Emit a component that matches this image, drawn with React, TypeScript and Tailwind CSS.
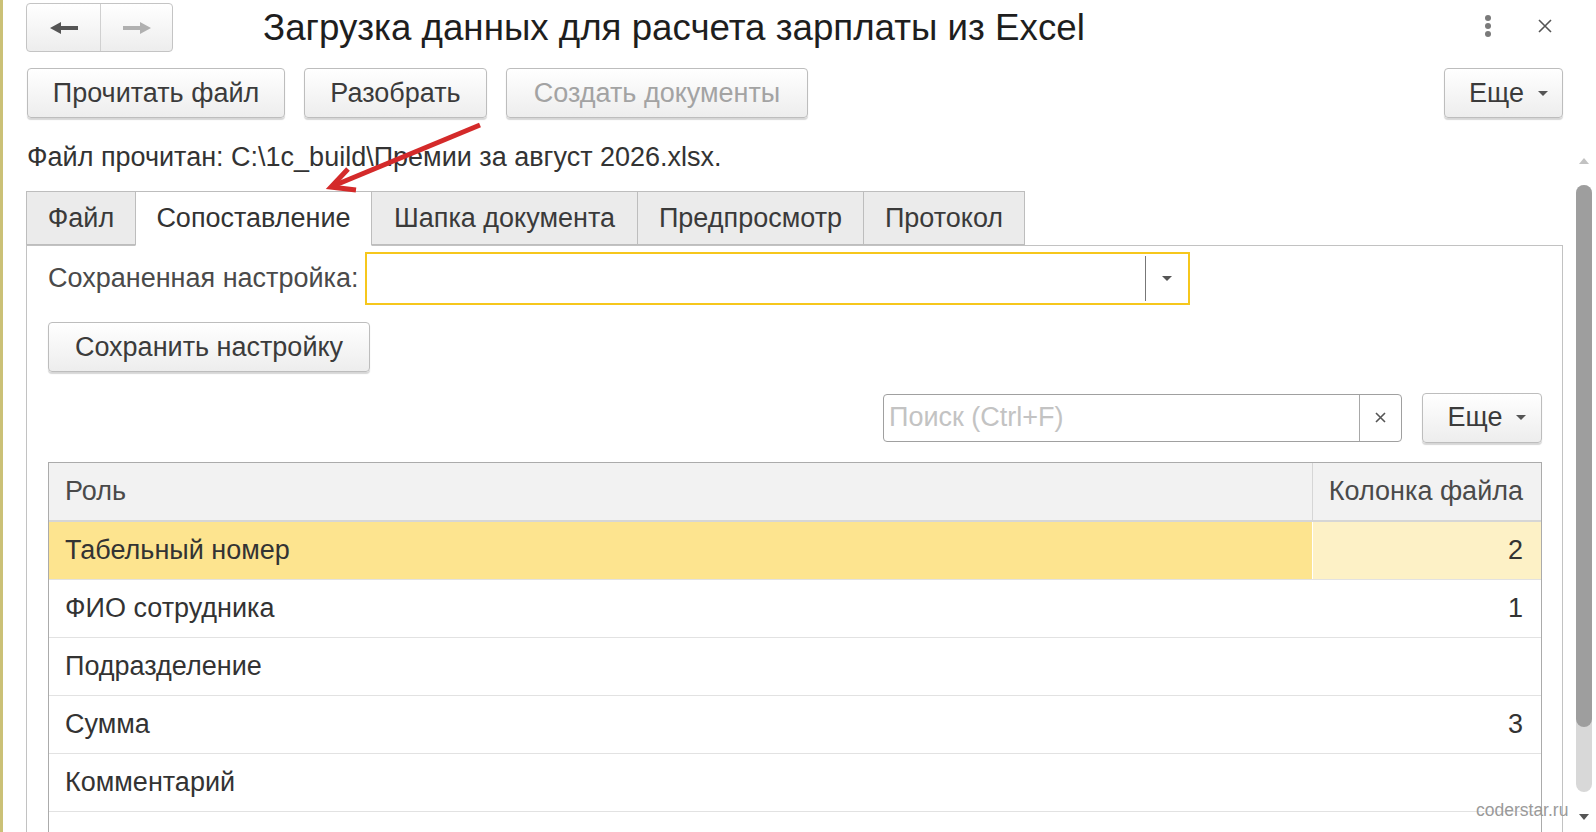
import React from 'react';

const Tri = ({ color = '#555' }: { color?: string }) => (
  <svg width="10" height="5" viewBox="0 0 10 5">
    <path d="M0 0h10L5 5z" fill={color} />
  </svg>
);

interface BtnProps {
  children: React.ReactNode;
  className?: string;
  disabled?: boolean;
}

const Btn: React.FC<BtnProps> = ({ children, className = '', disabled }) => (
  <div
    className={`h-[50px] shrink-0 flex items-center justify-center rounded-[4px] border border-[#bdbdbd] bg-linear-to-b from-white to-[#ededed] shadow-[0_2px_1px_rgba(0,0,0,0.16)] text-[27px] ${
      disabled ? 'text-[#a3a3a3]' : 'text-[#3b3b3b]'
    } ${className}`}
  >
    {children}
  </div>
);

const rows: { role: string; col: string }[] = [
  { role: 'Табельный номер', col: '2' },
  { role: 'ФИО сотрудника', col: '1' },
  { role: 'Подразделение', col: '' },
  { role: 'Сумма', col: '3' },
  { role: 'Комментарий', col: '' },
  { role: '', col: '' },
];

const tabs = [
  { name: 'Файл', w: 'w-[110px]' },
  { name: 'Сопоставление', w: 'w-[237px]', active: true },
  { name: 'Шапка документа', w: 'w-[267px]' },
  { name: 'Предпросмотр', w: 'w-[227px]' },
  { name: 'Протокол', w: 'w-[162px]' },
];

export default function App() {
  return (
    <div className="relative w-[1596px] h-[832px] overflow-hidden bg-white flex font-['Liberation_Sans',Arial,sans-serif] text-[#333]">
      <div className="w-[3px] h-full shrink-0 bg-[#cbc177]" />
      <div className="flex-1 flex flex-col min-h-0">
        {/* top bar */}
        <div className="h-[68px] shrink-0 flex items-start">
          <div className="mt-[3px] ml-[23px] w-[147px] h-[49px] flex rounded-[4px] border border-[#c4c4c4] bg-linear-to-b from-white to-[#ededed]">
            <div className="w-[74px] flex items-center justify-center border-r border-[#d0d0d0]">
              <svg width="28" height="12" viewBox="0 0 28 12">
                <path d="M0 6L11 0v4h17v4H11v4z" fill="#555" />
              </svg>
            </div>
            <div className="flex-1 flex items-center justify-center">
              <svg width="28" height="12" viewBox="0 0 28 12">
                <path d="M28 6L17 0v4H0v4h17v4z" fill="#b0b0b0" />
              </svg>
            </div>
          </div>
          <div className="ml-[90px] mt-[8px] text-[36.7px] leading-[40px] text-[#1e1e1e] whitespace-nowrap">
            Загрузка данных для расчета зарплаты из Excel
          </div>
          <div className="ml-auto mt-[15px] flex flex-col gap-[2px] items-center">
            <div className="w-[6px] h-[6px] rounded-full bg-[#7a7a7a]" />
            <div className="w-[6px] h-[6px] rounded-full bg-[#7a7a7a]" />
            <div className="w-[6px] h-[6px] rounded-full bg-[#7a7a7a]" />
          </div>
          <div className="ml-[47px] mr-[44px] mt-[19px]">
            <svg width="14" height="14" viewBox="0 0 14 14">
              <path d="M1 1l12 12M13 1L1 13" stroke="#555" strokeWidth="1.6" />
            </svg>
          </div>
        </div>

        {/* command bar */}
        <div className="h-[50px] shrink-0 flex items-center pl-[24px] pr-[33px]">
          <Btn className="w-[258px]">Прочитать файл</Btn>
          <Btn className="w-[183px] ml-[19px]">Разобрать</Btn>
          <Btn className="w-[302px] ml-[19px]" disabled>
            Создать документы
          </Btn>
          <Btn className="w-[119px] ml-auto gap-[14px] pl-[10px]">
            <span>Еще</span>
            <Tri />
          </Btn>
        </div>

        {/* scrollable area */}
        <div className="flex-1 min-h-0 flex overflow-hidden">
          <div className="ml-[23px] w-[1537px] shrink-0 flex flex-col">
            <div className="mt-[24px] h-[30px] shrink-0 text-[27px] leading-[30px] pl-px whitespace-nowrap">
              Файл прочитан: C:\1c_build\Премии за август 2026.xlsx.
            </div>
            <div className="mt-[19px] h-[54px] shrink-0 flex relative z-10">
              {tabs.map((t) => (
                <div
                  key={t.name}
                  className={`${t.w} flex items-center justify-center text-[27px] border border-[#bdbdbd] -ml-px first:ml-0 ${
                    t.active ? 'h-[55px] bg-white border-b-white text-[#333]' : 'bg-[#ebebeb] h-[54px] text-[#3a3a3a]'
                  }`}
                >
                  {t.name}
                </div>
              ))}
            </div>
            <div className="flex-1 border border-[#c2c2c2] pl-[21px] pr-[20px] flex flex-col">
              <div className="mt-[6px] h-[53px] shrink-0 flex items-center">
                <span className="text-[27px] text-[#4a4a4a] w-[317px] whitespace-nowrap">Сохраненная настройка:</span>
                <div className="w-[825px] h-[53px] border-2 border-[#f6c71c] flex items-center justify-end">
                  <div className="w-px h-[45px] bg-[#777]" />
                  <div className="w-[42px] flex justify-center">
                    <Tri />
                  </div>
                </div>
              </div>
              <Btn className="mt-[17px] w-[322px]">Сохранить настройку</Btn>
              <div className="mt-[21px] h-[49px] shrink-0 flex items-center justify-end">
                <div className="w-[519px] h-[48px] border border-[#a0a0a0] rounded-[4px] flex items-center">
                  <span className="flex-1 pl-[5px] text-[27px] text-[#c3c3c3]">Поиск (Ctrl+F)</span>
                  <div className="w-[42px] h-full border-l border-[#a8a8a8] flex items-center justify-center">
                    <svg width="11" height="11" viewBox="0 0 11 11">
                      <path d="M1 1l9 9M10 1l-9 9" stroke="#555" strokeWidth="1.6" />
                    </svg>
                  </div>
                </div>
                <Btn className="ml-[20px] w-[120px] h-[49px] gap-[14px] pl-[10px]">
                  <span>Еще</span>
                  <Tri />
                </Btn>
              </div>
              <div className="mt-[20px] border border-[#ababab] border-b-0 flex-1">
                <div className="h-[59px] flex bg-[#f2f2f2] border-b-2 border-[#d6d6d6] text-[27px] text-[#4a4a4a]">
                  <div className="w-[1264px] flex items-center pl-[16px] border-r border-[#d6d6d6]">Роль</div>
                  <div className="flex-1 flex items-center justify-end pr-[18px] whitespace-nowrap">Колонка файла</div>
                </div>
                {rows.map((r, i) => (
                  <div
                    key={i}
                    className="h-[58px] flex text-[27px] text-[#333] border-b border-[#e2e2e2]"
                  >
                    <div
                      className={`w-[1264px] flex items-center pl-[16px] ${
                        i === 0 ? 'bg-[#fde48f] border-r border-white' : ''
                      }`}
                    >
                      {r.role}
                    </div>
                    <div
                      className={`flex-1 flex items-center justify-end pr-[18px] ${i === 0 ? 'bg-[#fdf1c6]' : ''}`}
                    >
                      {r.col}
                    </div>
                  </div>
                ))}
              </div>
            </div>
          </div>

          {/* scrollbar */}
          <div className="ml-[13px] w-[16px] shrink-0 flex flex-col items-center">
            <div className="mt-[40px]">
              <svg width="10" height="6" viewBox="0 0 10 6">
                <path d="M0 6h10L5 0z" fill="#c2c2c2" />
              </svg>
            </div>
            <div className="mt-[21px] w-[16px] h-[607px] shrink-0 rounded-full bg-[#d8d8d8] flex flex-col">
              <div className="h-[542px] rounded-full bg-[#9e9e9e]" />
            </div>
            <div className="mt-[22px]">
              <svg width="10" height="6" viewBox="0 0 10 6">
                <path d="M0 0h10L5 6z" fill="#555" />
              </svg>
            </div>
          </div>
        </div>
      </div>

      {/* red annotation arrow */}
      <svg className="absolute left-0 top-0 z-20 pointer-events-none" width="1596" height="832">
        <path d="M480 125L333 186" stroke="#d42a2a" strokeWidth="5" />
        <path d="M348 169L331 187L356 190" stroke="#d42a2a" strokeWidth="5" fill="none" strokeLinejoin="miter" />
      </svg>

      <div className="absolute left-[1476px] top-[797px] z-20 text-[17.5px] text-[#9a9a9a]">coderstar.ru</div>
    </div>
  );
}
